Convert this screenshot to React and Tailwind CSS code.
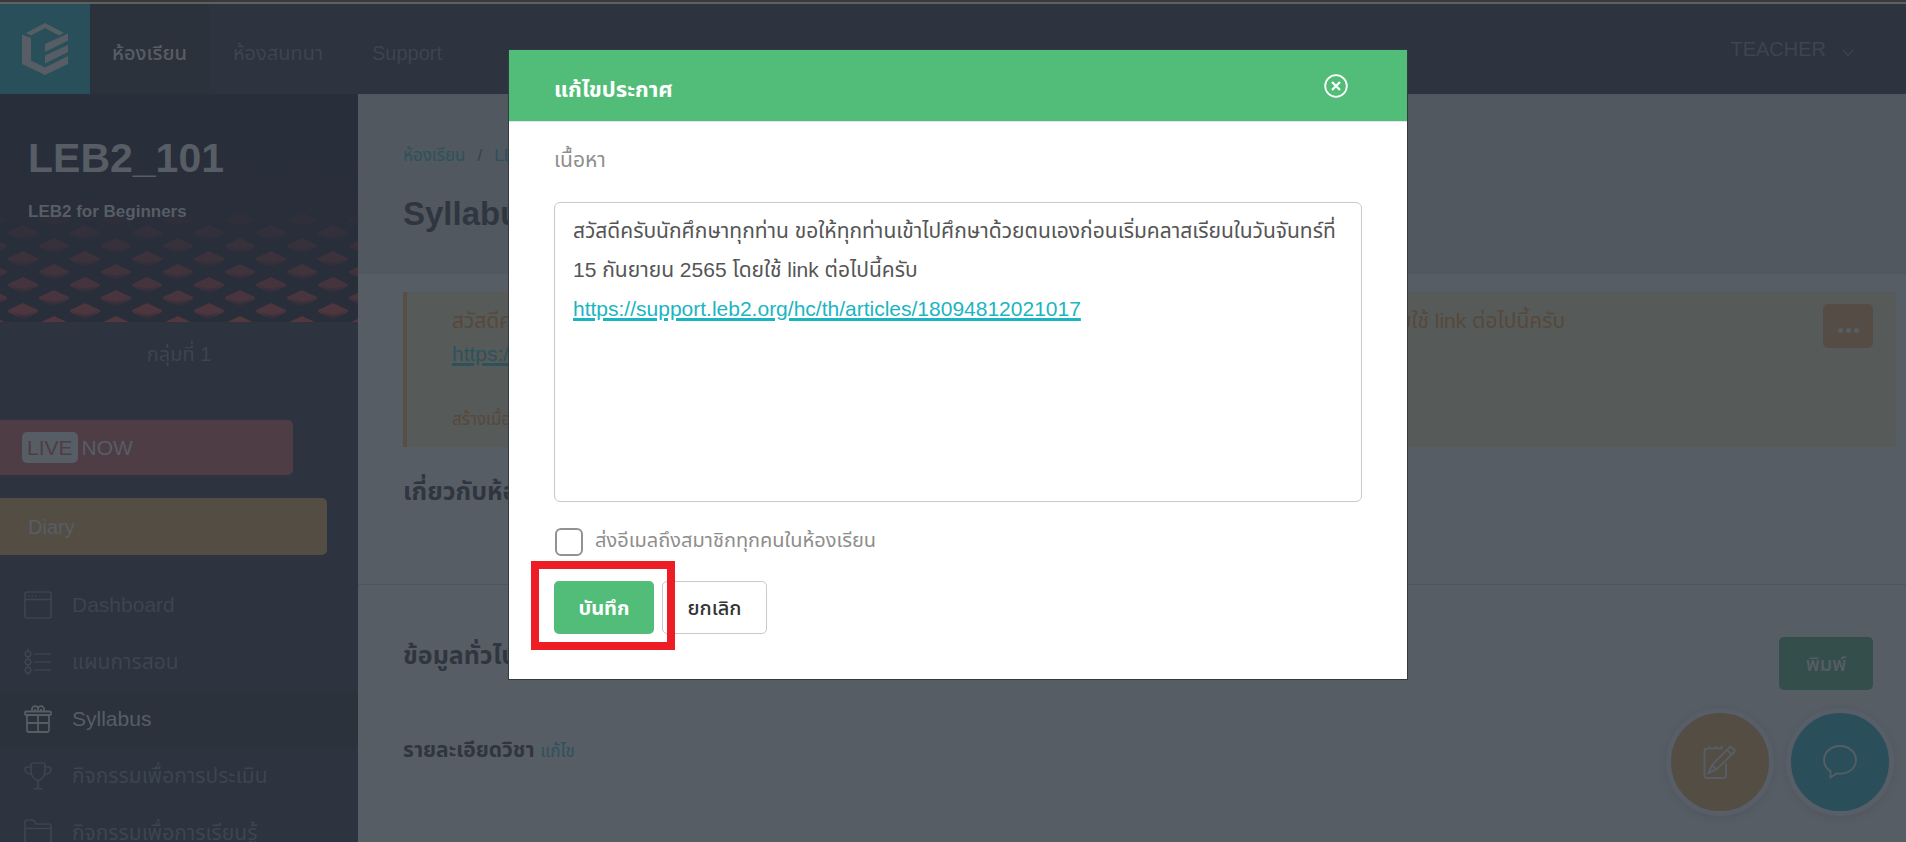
import React, { useState } from 'react';

const ICON = 'h-[28px] w-[28px] shrink-0';

function LogoIcon() {
    return (
        <svg viewBox="0 0 46 52" className="h-[52px] w-[46px]" fill="#575d65">
            <path d="M4 10 23 0l19 10-5 2.500L23 5 9 12.500z" />
            <path d="M0 11.500 9 15v22.500l14 7L46 33v8L23 52 0 41z" />
            <path d="M23 21 46 10.500v7L23 29z" />
            <path d="M23 32.500 46 22v7L23 40.500z" />
        </svg>
    );
}

function WindowIcon() {
    return (
        <svg viewBox="0 0 28 28" className={ICON} fill="none" stroke="currentColor" strokeWidth="1.600">
            <rect x="1" y="1" width="26" height="26" rx="2" />
            <path d="M1 8.500h26" />
            <path d="M4 5h1.500M7.500 5H9M11 5h1.500" />
        </svg>
    );
}

function TimelineIcon() {
    return (
        <svg viewBox="0 0 28 28" className={ICON} fill="none" stroke="currentColor" strokeWidth="1.600">
            <path d="M4 1v2M4 9v2M4 17v2M4 25v2" />
            <circle cx="4" cy="6" r="2.800" />
            <circle cx="4" cy="14" r="2.800" />
            <circle cx="4" cy="22" r="2.800" />
            <path d="M10 6h17M10 14h17M10 22h17" />
        </svg>
    );
}

function GiftIcon() {
    return (
        <svg viewBox="0 0 28 28" className={ICON} fill="none" stroke="currentColor" strokeWidth="1.800">
            <rect x="1" y="6.500" width="26" height="3.500" rx="1" />
            <path d="M3 10v15a2 2 0 0 0 2 2h18a2 2 0 0 0 2-2V10M14 10v17M3 18h22" />
            <path d="M8 6.500V4a2.800 2.800 0 0 1 2.800-2.800h.4A2.800 2.800 0 0 1 14 4v2.500M14 6.500V4a2.800 2.800 0 0 1 2.800-2.800h.4A2.800 2.800 0 0 1 20 4v2.500M11 6.500V4M17 6.500V4" />
        </svg>
    );
}

function TrophyIcon() {
    return (
        <svg viewBox="0 0 28 28" className={ICON} fill="none" stroke="currentColor" strokeWidth="1.600">
            <path d="M7 6V3a2 2 0 0 1 2-2h10a2 2 0 0 1 2 2v7c0 3.500-3 7-7 9-4-2-7-5.500-7-9z" />
            <path d="M7 5H3a2 2 0 0 0-2 2c0 3 2 5 6.500 5.500M21 5h4a2 2 0 0 1 2 2c0 3-2 5-6.500 5.500M14 19v7.500M9.500 26.800h9" />
        </svg>
    );
}

function FolderIcon() {
    return (
        <svg viewBox="0 0 28 28" className={ICON} fill="none" stroke="currentColor" strokeWidth="1.600">
            <path d="M1 26V3a2 2 0 0 1 2-2h6.500L12 5h13a2 2 0 0 1 2 2v18a2 2 0 0 1-2 2H3a2 2 0 0 1-2-2zM1 9.500h26" />
        </svg>
    );
}

function NotepadIcon() {
    return (
        <svg viewBox="0 0 34 34" className="h-[34px] w-[34px]" fill="none" stroke="currentColor" strokeWidth="2">
            <path d="M20 3.500H4a2.500 2.500 0 0 0-2.500 2.500v24.500A2.500 2.500 0 0 0 4 33h16.500a2.500 2.500 0 0 0 2.500-2.500V18" />
            <path d="M6.500 1v3M12.500 1v3M18.500 1v3" />
            <path d="M5.500 28 9 20 26.500 2.200q1-1 2 0l2.800 2.800q1 1 0 2L13.500 24.500zM9 20l4.500 4.500M24 5l5 5" />
        </svg>
    );
}

function ChatIcon() {
    return (
        <svg viewBox="0 0 34 34" className="h-[34px] w-[34px]" fill="none" stroke="currentColor" strokeWidth="1.800">
            <path d="M17 1C8.200 1 1 7 1 15c0 4.800 2.300 8.600 6.500 11.200v6.300l6-4.100c1.100.2 2.300.3 3.500.3 8.800 0 16-5.700 16-13.700S25.800 1 17 1z" />
        </svg>
    );
}

// Rows of tiles fading upwards, every second row is shifted by half a tile
function CoverPattern() {
    const rows = Array.from({ length: 13 }, (_, i) => i);
    const cols = Array.from({ length: 7 }, (_, i) => i);

    return (
        <svg viewBox="0 0 358 228" className="absolute inset-0 h-full w-full">
            <defs>
                <linearGradient id="skirt" x1="0" y1="0" x2="0" y2="1">
                    <stop offset="0.2" stopColor="#53373f" stopOpacity="0.9" />
                    <stop offset="1" stopColor="#53373f" stopOpacity="0" />
                </linearGradient>
            </defs>
            {rows.map(row => (
                <g key={row} opacity={Math.max(0.03, 1 - row * 0.105)}>
                    {cols.map(col => {
                        const x = (row % 2 ? 23 : -8) + col * 62;
                        const y = 229 - row * 13;
                        return (
                            <g key={col}>
                                <path d={`M${x - 15} ${y}v2l15 8 15-8v-2z`} fill="url(#skirt)" />
                                <path d={`M${x - 15} ${y}l15-7 15 7-15 5z`} fill="#53373f" />
                            </g>
                        );
                    })}
                </g>
            ))}
        </svg>
    );
}

const menu = [
    { label: 'Dashboard', Icon: WindowIcon },
    { label: 'แผนการสอน', Icon: TimelineIcon },
    { label: 'Syllabus', Icon: GiftIcon, active: true },
    { label: 'กิจกรรมเพื่อการประเมิน', Icon: TrophyIcon },
    { label: 'กิจกรรมเพื่อการเรียนรู้', Icon: FolderIcon },
];

function TopBar() {
    return (
        <header className="flex h-[94px] shrink-0 items-stretch border-t-2 border-[#37393b] bg-[#2d333f] text-[20px] text-[#3b464f]">
            <div className="flex w-full border-t-2 border-[#5f6062]">
                <a href="#home" aria-label="LEB2" className="flex w-[90px] items-center justify-center bg-[#29505a]">
                    <LogoIcon />
                </a>
                <nav className="flex items-center">
                    <a href="#class" className="flex h-full w-[119px] items-center justify-center bg-[#2b323b] pt-2 font-medium text-[#575d65]">ห้องเรียน</a>
                    <a href="#talk" className="flex h-full w-[138px] items-center justify-center pt-2">ห้องสนทนา</a>
                    <a href="#support" className="flex h-full w-[120px] items-center justify-center pt-2">Support</a>
                </nav>
                <button type="button" className="mr-[52px] ml-auto flex items-center gap-4">
                    TEACHER
                    <svg viewBox="0 0 12 8" className="mt-2 h-2 w-3" fill="none" stroke="currentColor" strokeWidth="1.300"><path d="m1 1 5 5.500L11 1" /></svg>
                </button>
            </div>
        </header>
    );
}

function Sidebar() {
    return (
        <aside className="flex w-[358px] shrink-0 flex-col bg-[#2d333f] text-[20px] text-[#3b464f]">
            <div className="relative h-[228px] shrink-0 overflow-hidden bg-[#282e3a]">
                <CoverPattern />
                <div className="relative px-7 pt-9 text-[#575d65]">
                    <h1 className="text-[41px] leading-[56px] font-bold">LEB2_101</h1>
                    <p className="mt-3.5 text-[17px] leading-6 font-bold">LEB2 for Beginners</p>
                </div>
            </div>
            <p className="mt-3.5 text-center leading-9">กลุ่มที่ 1</p>
            <a href="#live" className="mt-12 flex h-[55px] w-[293px] shrink-0 items-center gap-1 rounded-r-[5px] bg-[#4e3d44] pl-[22px] text-[21px] text-[#575d65]">
                <span className="rounded-[5px] bg-[#575d65] px-[5px] leading-[31px] font-medium text-[#4e3d44]">LIVE</span>
                NOW
            </a>
            <a href="#diary" className="mt-[23px] flex h-[57px] w-[327px] shrink-0 items-center rounded-r-[5px] bg-[#544d43] pl-7 text-[#575d65]">Diary</a>
            <nav className="mt-[22px]">
                {menu.map(({ label, Icon, active }) => (
                    <a
                        key={label}
                        href="#menu"
                        className={`flex h-[57px] items-center gap-5 pb-0.5 pl-6 text-[21px] whitespace-nowrap ${active ? 'bg-[#2b323b] text-[#575d65]' : ''}`}
                    >
                        <Icon />
                        {label}
                    </a>
                ))}
            </nav>
        </aside>
    );
}

function Content() {
    return (
        <main className="min-w-0 flex-1 overflow-hidden bg-[#575d65] text-[#30363f]">
            <div className="h-[180px] bg-[#51585f] px-[45px] pt-11">
                <nav className="flex gap-3 text-[17px] leading-9 text-[#2d525c]">
                    <a href="#class">ห้องเรียน</a>
                    <span className="text-[#3b4149]">/</span>
                    <a href="#leb2">LEB2_101</a>
                </nav>
                <h2 className="mt-4 text-[33px] leading-[48px] font-bold">Syllabus</h2>
            </div>

            <div className="mt-[18px] mr-2.5 ml-[45px] flex h-[155px] justify-between border-l-4 border-[#574f45] bg-[#565a58] pt-3 pr-[23px] pl-[45px] text-[21px] text-[#57483b]">
                <div className="min-w-0 whitespace-nowrap">
                    <p className="leading-[33px]">
                        สวัสดีครับนักศึกษาทุกท่าน ขอให้ทุกท่านเข้าไปศึกษาด้วยตนเองก่อนเริ่มคลาสเรียนในวันจันทร์ที่ 15 กันยายน 2565 โดยใช้ link ต่อไปนี้ครับ
                    </p>
                    <a href="#article" className="leading-[33px] text-[#2d525c] underline decoration-[3px] underline-offset-2">https://support.leb2.org/hc/th/articles/18094812021017</a>
                    <p className="mt-8 text-[17px] leading-9">สร้างเมื่อ 15 กันยายน 2565</p>
                </div>
                <button type="button" aria-label="เมนู" className="flex h-11 w-[50px] shrink-0 items-center justify-center gap-[3px] rounded-[5px] bg-[#554c45] pt-2">
                    <span className="h-[5px] w-[5px] rounded-full bg-[#575d65]" />
                    <span className="h-[5px] w-[5px] rounded-full bg-[#575d65]" />
                    <span className="h-[5px] w-[5px] rounded-full bg-[#575d65]" />
                </button>
            </div>

            <h3 className="mt-5 ml-[45px] text-[25px] leading-[48px] font-bold">เกี่ยวกับห้องเรียน</h3>

            <section className="mt-[69px] border-t border-[#4f555d] pr-[33px] pl-[45px]">
                <div className="flex items-start justify-between pt-[52px]">
                    <h3 className="text-[25px] leading-[36px] font-bold">ข้อมูลทั่วไป</h3>
                    <button type="button" className="h-[53px] w-[94px] rounded-[5px] bg-[#344f4b] text-[20px] font-medium text-[#575d65]">พิมพ์</button>
                </div>
                <div className="mt-11 flex items-baseline gap-1.5 leading-8">
                    <h4 className="text-[21px] font-bold">รายละเอียดวิชา</h4>
                    <a href="#edit" className="text-[17px] text-[#2d525c]">แก้ไข</a>
                </div>
            </section>
        </main>
    );
}

function FloatingButtons() {
    return (
        <div className="fixed right-3 bottom-[26px] flex gap-3 text-[#575d65]">
            <button type="button" aria-label="Note" className="flex h-[108px] w-[108px] items-center justify-center rounded-full border-[5px] border-[#585e68] bg-[#544d43] shadow-[0_2px_8px_rgba(0,0,0,0.08)]">
                <NotepadIcon />
            </button>
            <button type="button" aria-label="Chat" className="flex h-[108px] w-[108px] items-center justify-center rounded-full border-[5px] border-[#585e68] bg-[#2a4e5a] shadow-[0_2px_8px_rgba(0,0,0,0.08)]">
                <ChatIcon />
            </button>
        </div>
    );
}

function EditModal() {
    const [sendMail, setSendMail] = useState(false);

    return (
        <div className="fixed inset-0 flex items-start justify-center pt-[49px] pl-[10px]">
            <div role="dialog" aria-modal="true" aria-labelledby="modal-title" className="w-[900px] border border-[#34393f] bg-white text-[21px]">
                <div className="flex h-[72px] items-center justify-between border-b border-[#e5e5e5] bg-[#51bd78] px-[45px] text-white">
                    <h2 id="modal-title" className="pt-2 text-[22px] font-bold">แก้ไขประกาศ</h2>
                    <button type="button" aria-label="ปิด" className="mr-3.5">
                        <svg viewBox="0 0 24 24" className="h-6 w-6" fill="none" stroke="currentColor" strokeWidth="1.800">
                            <circle cx="12" cy="12" r="10.800" />
                            <path d="m8 8 8 8M16 8l-8 8" strokeWidth="2.200" />
                        </svg>
                    </button>
                </div>
                <form className="px-[45px] pt-[18px] pb-[45px]" onSubmit={e => e.preventDefault()}>
                    <span id="content-label" className="block leading-10 text-[#8e8e8e]">เนื้อหา</span>
                    <div
                        role="textbox"
                        aria-multiline="true"
                        aria-labelledby="content-label"
                        contentEditable
                        suppressContentEditableWarning
                        className="mt-[22px] h-[300px] overflow-hidden rounded-[6px] border border-[#c9c9c9] px-[18px] pt-2 leading-[39px] whitespace-nowrap text-[#555]"
                    >
                        <p>สวัสดีครับนักศึกษาทุกท่าน ขอให้ทุกท่านเข้าไปศึกษาด้วยตนเองก่อนเริ่มคลาสเรียนในวันจันทร์ที่</p>
                        <p>15 กันยายน 2565 โดยใช้ link ต่อไปนี้ครับ</p>
                        <p>
                            <a href="#article" className="text-[#1bb5c1] underline decoration-[3px] underline-offset-2">https://support.leb2.org/hc/th/articles/18094812021017</a>
                        </p>
                    </div>
                    <label className="mt-[18px] flex items-center gap-3 text-[20px] leading-10 text-[#8e8e8e]">
                        <input
                            type="checkbox"
                            checked={sendMail}
                            onChange={e => setSendMail(e.target.checked)}
                            className="mt-1 ml-px h-7 w-7 appearance-none rounded-[6px] border-2 border-[#929292] bg-white checked:bg-[#51bd78]"
                        />
                        ส่งอีเมลถึงสมาชิกทุกคนในห้องเรียน
                    </label>
                    <div className="mt-[21px] flex gap-2 text-[20px]">
                        <div className="relative">
                            <button type="submit" className="h-[53px] w-[100px] rounded-[5px] bg-[#51bd78] font-bold text-white">บันทึก</button>
                            <span className="pointer-events-none absolute -top-5 -right-[21px] -bottom-4 -left-[23px] z-10 border-8 border-[#ee1c25]" />
                        </div>
                        <button type="button" className="h-[53px] w-[105px] rounded-[5px] border border-[#c9c9c9] font-medium text-[#333]">ยกเลิก</button>
                    </div>
                </form>
            </div>
        </div>
    );
}

export default function App() {
    return (
        <div className="flex h-screen flex-col overflow-hidden font-['Liberation_Sans','Noto_Sans_Thai','Noto_Sans',sans-serif]">
            <TopBar />
            <div className="flex min-h-0 flex-1">
                <Sidebar />
                <Content />
            </div>
            <FloatingButtons />
            <EditModal />
        </div>
    );
}
